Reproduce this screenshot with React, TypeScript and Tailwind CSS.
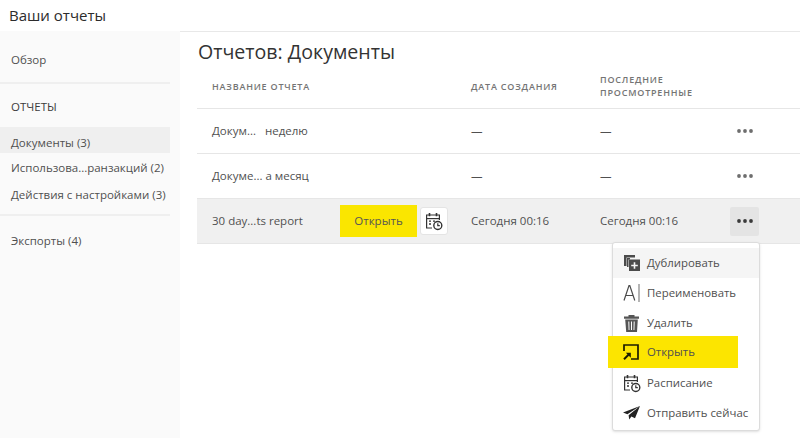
import React from 'react';

const font = "font-['Open_Sans','Noto_Sans',sans-serif]";

const Dots = ({ dark }: { dark?: boolean }) => (
  <svg width="16" height="4" viewBox="0 0 16 4" className={dark ? 'text-[#3a3a3a]' : 'text-[#6e6e6e]'} fill="currentColor">
    <circle cx="2" cy="2" r="1.9" />
    <circle cx="8" cy="2" r="1.9" />
    <circle cx="14" cy="2" r="1.9" />
  </svg>
);

const CalendarClock = () => (
  <svg width="18" height="19" viewBox="0 0 18 19" fill="none" stroke="#333" strokeWidth="1.2">
    <path d="M7 16H1.6V3h12.8v5" />
    <path d="M1.6 6.6h12.8" />
    <path d="M4.5 1v3.2M11.5 1v3.2" strokeWidth="1.6" />
    <path d="M4 9.2h2M4 12h2M8 9.2h2" strokeWidth="1.3" />
    <circle cx="12.8" cy="13.5" r="4" strokeWidth="1.4" fill="#fff" />
    <path d="M12.8 11.3v2.4h2" />
  </svg>
);

const DuplicateIcon = () => (
  <svg width="16" height="16" viewBox="0 0 16 16" fill="#4b4b4b">
    <path d="M0 0h11v2.5H2.5V11H0z" />
    <path d="M3 3h3v1.5H4.5V12H3z" />
    <path fillRule="evenodd" d="M5 4.5h11V16H5zM9.7 7.2v2.6H7.2v1.5h2.5v2.5h1.6v-2.5h2.5V9.8h-2.5V7.2z" />
  </svg>
);

const RenameIcon = () => (
  <svg width="18" height="18" viewBox="0 0 18 18" fill="none" stroke="#4b4b4b">
    <path d="M1 16.5 6 1.5h.8l5 15M3 11.5h7" strokeWidth="1.2" />
    <path d="M16 0v18" strokeWidth="1.1" stroke="#777" />
  </svg>
);

const TrashIcon = () => (
  <svg width="15" height="17" viewBox="0 0 15 17" fill="#555">
    <path d="M0 1.5h15v2.2H0zM4.5 0h6v1.5h-6z" />
    <path fillRule="evenodd" d="M1.2 4.4h12.6L13 17H2.2zM4.3 6.5l.3 8.5h.9L5.3 6.5zM7 6.5V15h1V6.5zM9.7 6.5 9.5 15h.9l.3-8.5z" />
  </svg>
);

const OpenIcon = () => (
  <svg width="16" height="16" viewBox="0 0 16 16" fill="none" stroke="#1c1c00">
    <path d="M1 7V1h14v14H8" strokeWidth="1.7" />
    <path d="M1 15.3 6 10.3" strokeWidth="2" />
    <path d="M2.8 8.8h5v5z" fill="#1c1c00" stroke="none" />
  </svg>
);

const SendIcon = () => (
  <svg width="17" height="14" viewBox="0 0 17 14" fill="#222">
    <path d="M17 0 0 6.5l4.4 1.8zM17 0 5.6 9.2l.6 4.3 2.2-3 3.6 1.7z" />
  </svg>
);

const Row = ({ name, active, created, viewed }: { name: string; active?: boolean; created: string; viewed: string }) => (
  <div className={`flex h-[45px] items-center border-b border-[#e6e6e6] text-[11.5px] text-[#505050] ${active ? 'bg-[#f0f0f0]' : ''}`}>
    <div className="w-[143px] whitespace-pre pl-[15px]">{name}</div>
    <div className="flex w-[131px] items-center">
      {active && (
        <>
          <button className="flex h-[32px] w-[77px] items-center justify-center bg-[#fae600] text-[11.5px] text-[#555]">Открыть</button>
          <span className="ml-[3px] flex h-[28px] w-[28px] items-center justify-center rounded-[3px] border border-[#e4e4e4] bg-white">
            <CalendarClock />
          </span>
        </>
      )}
    </div>
    <div className="w-[129px]">{created}</div>
    <div className="w-[130px]">{viewed}</div>
    <span className={`flex h-[29px] w-[29px] items-center justify-center rounded-[2px] ${active ? 'bg-[#e4e4e4]' : ''}`}>
      <Dots dark={active} />
    </span>
  </div>
);

const menu = [
  { label: 'Дублировать', icon: <DuplicateIcon />, bg: 'bg-[#f5f5f5]' },
  { label: 'Переименовать', icon: <RenameIcon />, bg: '' },
  { label: 'Удалить', icon: <TrashIcon />, bg: '' },
  { label: 'Открыть', icon: <OpenIcon />, bg: '' },
  { label: 'Расписание', icon: <CalendarClock />, bg: '' },
  { label: 'Отправить сейчас', icon: <SendIcon />, bg: '' },
];

export default function App() {
  return (
    <div className={`relative h-[438px] w-[800px] overflow-hidden bg-white ${font}`}>
      <header className="flex h-[31px] items-center pb-[1px] pl-[9px] text-[15px] font-medium text-[#2c2c2c]">Ваши отчеты</header>
      <div className="flex h-[407px]">
        <aside className="w-[180px] bg-[#fafafa] text-[11.5px] text-[#505050]">
          <div className="flex h-[51px] items-center pl-[11px] pt-[7px]">Обзор</div>
          <div className="h-[2px] w-[170px] bg-[#efefef]" />
          <div className="flex h-[43px] items-center pl-[11px] pt-[2px] text-[#3a3a3a]">ОТЧЕТЫ</div>
          <div className="flex h-[26px] w-[170px] items-center bg-[#efefef] pl-[11px] pt-[5px]">Документы (3)</div>
          <div className="flex h-[27px] items-center pl-[11px] pt-[3px]">Использова...ранзакций (2)</div>
          <div className="flex h-[26px] items-center pl-[11px] pt-[3px]">Действия с настройками (3)</div>
          <div className="mt-[8px] h-[2px] w-[170px] bg-[#efefef]" />
          <div className="flex h-[46px] items-center pl-[11px] pt-[3px]">Экспорты (4)</div>
        </aside>
        <main className="flex-1 border-t border-[#e8e8e8] pl-[17px]">
          <h1 className="h-[40px] pl-[1px] pt-[5px] text-[19.6px] leading-[30px] text-[#333]">Отчетов: Документы</h1>
          <div className="flex h-[37px] items-center border-b border-[#e6e6e6] pb-[8px] text-[9px] font-semibold uppercase leading-[13px] tracking-[0.8px] text-[#747474]">
            <div className="w-[274px] pl-[15px]">Название отчета</div>
            <div className="w-[129px]">Дата создания</div>
            <div className="w-[120px]">Последние просмотренные</div>
          </div>
          <Row name="Докум...   неделю" created="—" viewed="—" />
          <Row name="Докуме... а месяц" created="—" viewed="—" />
          <Row name="30 day...ts report" active created="Сегодня 00:16" viewed="Сегодня 00:16" />
        </main>
      </div>
      <div className="absolute left-[612px] top-[242px] h-[189px] w-[148px] rounded-[3px] border border-[#dcdcdc] bg-white py-[5px] text-[11.4px] text-[#505050] shadow-sm">
        {menu.map((m) => (
          <div key={m.label} className={`flex h-[30px] items-center ${m.bg}`}>
            <span className="flex w-[34px] justify-center pl-[3px]">{m.icon}</span>
            <span>{m.label}</span>
          </div>
        ))}
      </div>
      <div className="absolute left-[608px] top-[336px] flex h-[32px] w-[130px] items-center bg-[#fce500] text-[11.4px] text-[#505050]">
        <span className="flex w-[39px] justify-center pl-[7px]"><OpenIcon /></span>
        <span>Открыть</span>
      </div>
    </div>
  );
}
